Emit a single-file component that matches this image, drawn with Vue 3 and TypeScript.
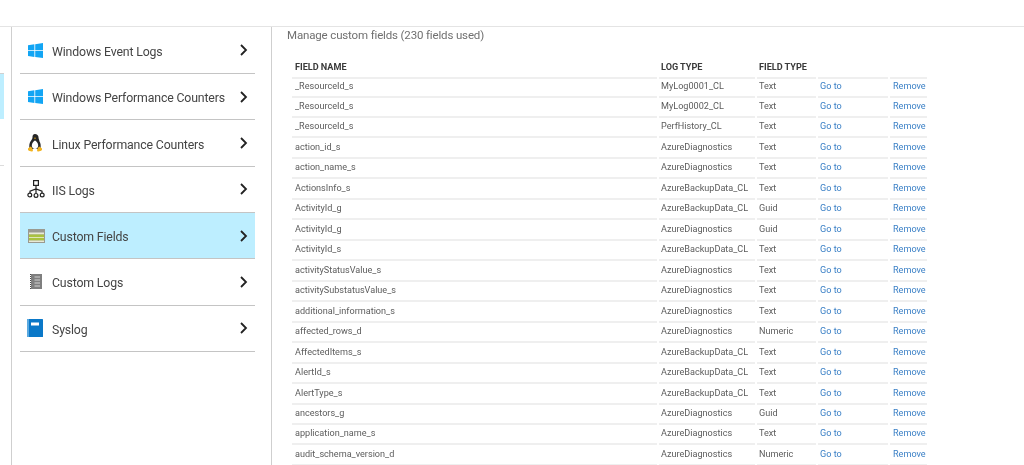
<script setup lang="ts">
type IconName = 'windows' | 'linux' | 'iis' | 'fields' | 'logs' | 'syslog'

interface NavItem {
  label: string
  icon: IconName
  active?: boolean
}

const navItems: NavItem[] = [
  { label: 'Windows Event Logs', icon: 'windows' },
  { label: 'Windows Performance Counters', icon: 'windows' },
  { label: 'Linux Performance Counters', icon: 'linux' },
  { label: 'IIS Logs', icon: 'iis' },
  { label: 'Custom Fields', icon: 'fields', active: true },
  { label: 'Custom Logs', icon: 'logs' },
  { label: 'Syslog', icon: 'syslog' }
]

const fields: [string, string, string][] = [
  ['_ResourceId_s', 'MyLog0001_CL', 'Text'],
  ['_ResourceId_s', 'MyLog0002_CL', 'Text'],
  ['_ResourceId_s', 'PerfHistory_CL', 'Text'],
  ['action_id_s', 'AzureDiagnostics', 'Text'],
  ['action_name_s', 'AzureDiagnostics', 'Text'],
  ['ActionsInfo_s', 'AzureBackupData_CL', 'Text'],
  ['ActivityId_g', 'AzureBackupData_CL', 'Guid'],
  ['ActivityId_g', 'AzureDiagnostics', 'Guid'],
  ['ActivityId_s', 'AzureBackupData_CL', 'Text'],
  ['activityStatusValue_s', 'AzureDiagnostics', 'Text'],
  ['activitySubstatusValue_s', 'AzureDiagnostics', 'Text'],
  ['additional_information_s', 'AzureDiagnostics', 'Text'],
  ['affected_rows_d', 'AzureDiagnostics', 'Numeric'],
  ['AffectedItems_s', 'AzureBackupData_CL', 'Text'],
  ['AlertId_s', 'AzureBackupData_CL', 'Text'],
  ['AlertType_s', 'AzureBackupData_CL', 'Text'],
  ['ancestors_g', 'AzureDiagnostics', 'Guid'],
  ['application_name_s', 'AzureDiagnostics', 'Text'],
  ['audit_schema_version_d', 'AzureDiagnostics', 'Numeric']
]
</script>

<template>
  <div class="page">
    <div class="topbar"></div>
    <div class="main">
      <div class="strip">
        <div class="strip-active"></div>
        <div class="strip-line"></div>
      </div>

      <aside class="panel">
        <div
          v-for="item in navItems"
          :key="item.label"
          class="nav-row"
          :class="{ active: item.active }"
        >
          <span class="nav-icon">
            <svg v-if="item.icon === 'windows'" class="shift" width="15" height="15" viewBox="0 0 16 16">
              <path fill="#12a5f4" d="M0 2.3 6.8 1.3V7.6H0ZM7.7 1.2 16 0V7.6H7.7ZM0 8.5H6.8V14.8L0 13.8ZM7.7 8.5H16V16L7.7 14.9Z" />
            </svg>
            <svg v-else-if="item.icon === 'linux'" class="shift" width="14" height="18" viewBox="0 0 14 18">
              <path fill="#262626" d="M7 0C5.2 0 4.4 1.4 4.5 3.2 4.6 4.8 3.6 5.6 2.6 7.2 1.4 9.2.9 11.4 1.6 15h10.8c.7-3.6.2-5.8-1-7.8C11.4 5.6 10.4 4.8 10.5 3.2 10.6 1.4 8.8 0 7 0Z" />
              <path fill="#fff" d="M7 6.6C6 6.6 4.2 9 3.8 11 3.5 13 5 15 7 15s3.5-2 3.2-4C9.8 9 8 6.6 7 6.6Z" />
              <path fill="#f2b31f" d="M6 3.8h2L7 5.2ZM0 14.6 2.6 12.6c1 .5 1.9 1.9 2.3 3.2.2.9-.4 1.8-1.3 1.6L.9 16.7c-.9-.4-1.2-1.2-.9-2.1ZM14 14.6 11.4 12.6c-1 .5-1.9 1.9-2.3 3.2-.2.9.4 1.8 1.3 1.6l2.7-.7c.9-.4 1.2-1.2.9-2.1Z" />
            </svg>
            <svg v-else-if="item.icon === 'iis'" width="18" height="18" viewBox="0 0 18 18" fill="none" stroke="#222" stroke-width="1.2">
              <rect x="6.6" y="0.6" width="4.8" height="4.8" />
              <path d="M9 5.4V13M3 13.2V11.2L9 9l6 2.2v2" />
              <circle cx="2.8" cy="15" r="1.9" />
              <circle cx="9" cy="15.4" r="1.9" />
              <circle cx="15.2" cy="15" r="1.9" />
            </svg>
            <svg v-else-if="item.icon === 'fields'" class="shift" width="17" height="14" viewBox="0 0 17 14">
              <rect width="17" height="14" fill="#9a9a90" />
              <rect x="1" y="3.5" width="15" height="2" fill="#e8ead8" />
              <rect x="1" y="5.5" width="15" height="2.5" fill="#a9c23f" />
              <rect x="1" y="8" width="15" height="1" fill="#dfe6b8" />
              <rect x="1" y="9" width="15" height="2.5" fill="#a9c23f" />
              <rect x="1" y="11.5" width="15" height="1.5" fill="#e8ead8" />
            </svg>
            <svg v-else-if="item.icon === 'logs'" class="icon-logs" width="12" height="15" viewBox="0 0 12 15">
              <rect x="1" width="11" height="15" fill="#7f7f7f" />
              <path stroke="#d4d4d4" d="M4.5 3h5.5M4.5 6h5.5M4.5 9h5.5M4.5 12h5.5" />
              <path stroke="#4a4a4a" stroke-dasharray="1 1" d="M.5 0v15" />
            </svg>
            <svg v-else width="16" height="18" viewBox="0 0 16 18">
              <rect width="16" height="18" rx="0.5" fill="#0a78c8" />
              <rect x="0" width="2" height="18" fill="#5aa9e0" />
              <rect x="4" y="3.5" width="8" height="3" fill="#fff" />
            </svg>
          </span>
          <span class="nav-label">{{ item.label }}</span>
          <svg class="chevron" width="8" height="12" viewBox="0 0 8 12" fill="none" stroke="#222" stroke-width="1.8">
            <path d="M1 1l5 5-5 5" />
          </svg>
        </div>
      </aside>

      <section class="content">
        <h2 class="title">Manage custom fields (230 fields used)</h2>
        <div class="grid head">
          <div>FIELD NAME</div>
          <div>LOG TYPE</div>
          <div>FIELD TYPE</div>
          <div></div>
          <div></div>
        </div>
        <div v-for="(row, i) in fields" :key="i" class="grid">
          <div>{{ row[0] }}</div>
          <div>{{ row[1] }}</div>
          <div>{{ row[2] }}</div>
          <div class="link">Go to</div>
          <div class="link">Remove</div>
        </div>
      </section>
    </div>
  </div>
</template>

<style>
html,
body {
  margin: 0;
  background: #fff;
  overflow: hidden;
}
</style>

<style scoped>
.page {
  width: 1024px;
  height: 465px;
  overflow: hidden;
  font-family: Roboto, "Open Sans", sans-serif;
  color: #444;
  background: #fff;
  filter: blur(0.3px);
}

.topbar {
  height: 26px;
  border-bottom: 1px solid #e4e4e4;
}

.main {
  display: flex;
  height: 438px;
}

.strip {
  width: 11px;
  padding-top: 46px;
  border-right: 1px solid #cfcfcf;
}

.strip-active {
  width: 4px;
  height: 46px;
  background: #bdeeff;
  border-top: 1px solid #d0d0d0;
  box-sizing: border-box;
}

.strip-line {
  margin-top: 46px;
  height: 1px;
  width: 4px;
  background: #dcdcdc;
}

.panel {
  width: 235px;
  padding: 0.7px 16px 0 8px;
  border-right: 1px solid #cfcfcf;
}

.nav-row {
  display: flex;
  align-items: center;
  height: 46.33px;
  border-bottom: 1px solid #c4c4c4;
  box-sizing: border-box;
  padding-left: 7px;
  color: #444;
}

.nav-row.active {
  background: #bdeeff;
}

.nav-icon {
  display: flex;
  width: 25px;
  flex: none;
  align-items: center;
  justify-content: flex-start;
}

.shift {
  margin-left: 1px;
}

.icon-logs {
  margin-left: 3px;
}

.nav-label {
  flex: 1;
  font-size: 12.3px;
  letter-spacing: -0.15px;
  padding-top: 3px;
  white-space: nowrap;
}

.chevron {
  margin-right: 7px;
}

.content {
  flex: 1;
  padding-left: 15px;
}

.title {
  margin: 0;
  height: 30px;
  font-size: 11.5px;
  letter-spacing: -0.15px;
  font-weight: 400;
  line-height: 16px;
  color: #707070;
}

.grid {
  display: grid;
  grid-template-columns: 365px 96px 59px 70px 37px;
  column-gap: 2px;
  height: 20.47px;
  margin-left: 5px;
  font-size: 9.1px;
  line-height: 20px;
  color: #5c5c5c;
}

.grid > div {
  border-bottom: 2px solid #efefef;
  box-sizing: border-box;
  padding-left: 2px;
  white-space: nowrap;
}

.grid > div:first-child,
.grid > div:last-child {
  padding-left: 3px;
}

.head {
  height: 18.5px;
  font-weight: 700;
  font-size: 9.1px;
  line-height: 20px;
  color: #3a3a3a;
}

.link {
  color: #3b80c6;
}
</style>
